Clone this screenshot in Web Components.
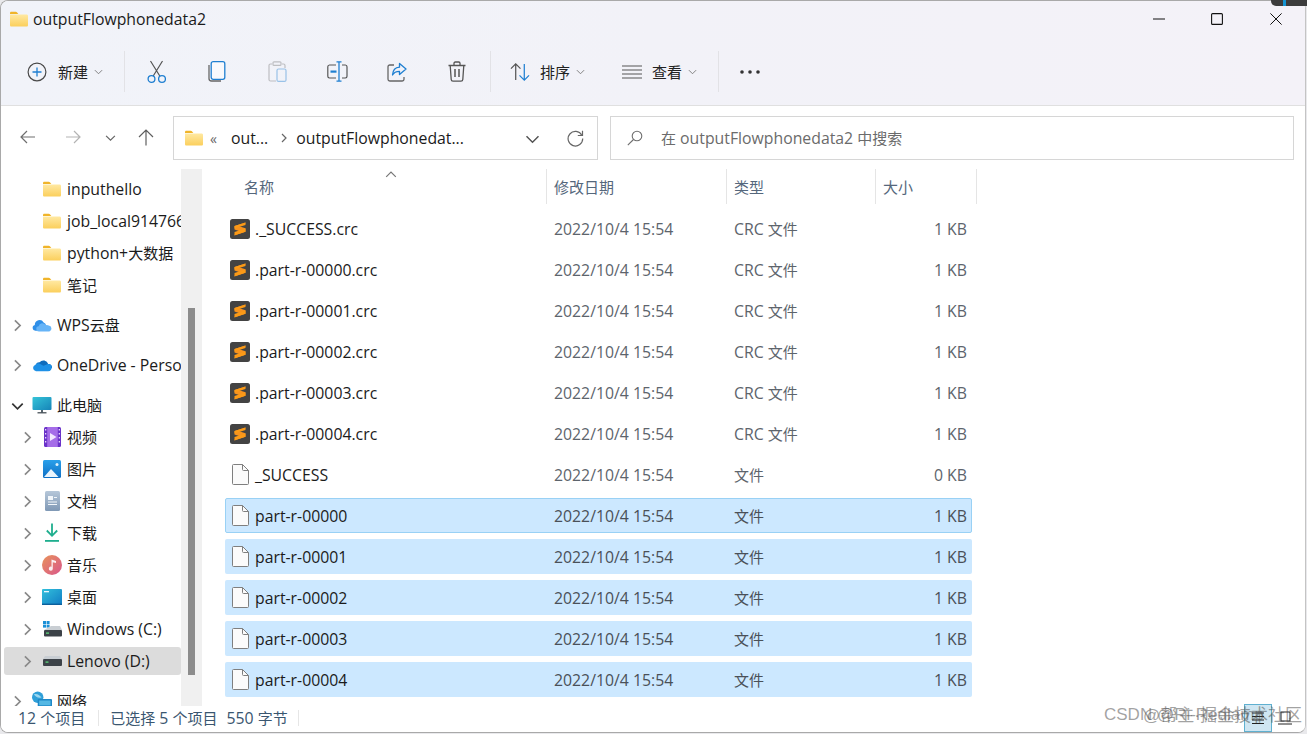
<!DOCTYPE html>
<html lang="zh">
<head>
<meta charset="utf-8">
<title>outputFlowphonedata2</title>
<style>
  html, body { margin: 0; padding: 0; background: #e9e9ec; overflow: hidden; }
  body { font-family: "Open Sans", "Noto Sans CJK SC", sans-serif; font-size: 15.8px; color: #1b1b1b; }
  .c { font-size: 15px; }
</style>
</head>
<body>

<explorer-window>
  <title-bar slot="title" heading="outputFlowphonedata2"></title-bar>
  <command-bar slot="commands"></command-bar>
  <address-row slot="address"></address-row>
  <nav-pane slot="nav">
    <nav-item depth="2" icon="folder">inputhello</nav-item>
    <nav-item depth="2" icon="folder">job_local914766</nav-item>
    <nav-item depth="2" icon="folder">python+<span class="c">大数据</span></nav-item>
    <nav-item depth="2" icon="folder"><span class="c">笔记</span></nav-item>
    <nav-item section depth="1" icon="wps" chevron="right">WPS<span class="c">云盘</span></nav-item>
    <nav-item section depth="1" icon="onedrive" chevron="right">OneDrive - Personal</nav-item>
    <nav-item section depth="1" icon="pc" chevron="down"><span class="c">此电脑</span></nav-item>
    <nav-item depth="2" icon="video" chevron="right"><span class="c">视频</span></nav-item>
    <nav-item depth="2" icon="pictures" chevron="right"><span class="c">图片</span></nav-item>
    <nav-item depth="2" icon="docs" chevron="right"><span class="c">文档</span></nav-item>
    <nav-item depth="2" icon="download" chevron="right"><span class="c">下载</span></nav-item>
    <nav-item depth="2" icon="music" chevron="right"><span class="c">音乐</span></nav-item>
    <nav-item depth="2" icon="desktop" chevron="right"><span class="c">桌面</span></nav-item>
    <nav-item depth="2" icon="drivec" chevron="right">Windows (C:)</nav-item>
    <nav-item depth="2" icon="drived" chevron="right" active>Lenovo (D:)</nav-item>
    <nav-item section depth="1" icon="network" chevron="right"><span class="c">网络</span></nav-item>
  </nav-pane>
  <file-list slot="files">
    <file-row icon="sublime" name="._SUCCESS.crc" kind="CRC 文件" size="1 KB"></file-row>
    <file-row icon="sublime" name=".part-r-00000.crc" kind="CRC 文件" size="1 KB"></file-row>
    <file-row icon="sublime" name=".part-r-00001.crc" kind="CRC 文件" size="1 KB"></file-row>
    <file-row icon="sublime" name=".part-r-00002.crc" kind="CRC 文件" size="1 KB"></file-row>
    <file-row icon="sublime" name=".part-r-00003.crc" kind="CRC 文件" size="1 KB"></file-row>
    <file-row icon="sublime" name=".part-r-00004.crc" kind="CRC 文件" size="1 KB"></file-row>
    <file-row icon="file" name="_SUCCESS" kind="文件" size="0 KB"></file-row>
    <file-row icon="file" name="part-r-00000" kind="文件" size="1 KB" selected focused></file-row>
    <file-row icon="file" name="part-r-00001" kind="文件" size="1 KB" selected></file-row>
    <file-row icon="file" name="part-r-00002" kind="文件" size="1 KB" selected></file-row>
    <file-row icon="file" name="part-r-00003" kind="文件" size="1 KB" selected></file-row>
    <file-row icon="file" name="part-r-00004" kind="文件" size="1 KB" selected></file-row>
  </file-list>
  <status-bar slot="status"></status-bar>
</explorer-window>

<script>
  (function() {

    const ICONS = {
      folder: `<svg viewBox="0 0 18 16" width="18" height="16"><path d="M0 2.2C0 1.3.6.8 1.4.8h4.4c.5 0 .8.2 1.1.5L8.3 3H0z" fill="#f0b429"/><path d="M0 3.4h16.6c.8 0 1.4.6 1.4 1.4v9.4c0 .8-.6 1.3-1.4 1.3H1.4C.6 15.5 0 15 0 14.2z" fill="url(#fg)"/><defs><linearGradient id="fg" x1="0" y1="0" x2="0" y2="1"><stop offset="0" stop-color="#ffe9a3"/><stop offset="1" stop-color="#fbcf5c"/></linearGradient></defs></svg>`,
      sublime: `<svg viewBox="0 0 20 20" width="20" height="20"><rect width="20" height="20" rx="2.5" fill="#434343"/><path d="M15.5 3.500 4.500 7v3.600l7.400 2.400-7.400 2.500v1l11-3.700V9.200L8.200 6.900l7.300-2.300z" fill="#f7931e"/><path d="M15.500 3.500 4.500 7v2.600l11-3.500zM4.500 13l11-3.500v3.200l-11 3.600z" fill="#fb9a17"/></svg>`,
      file: `<svg viewBox="0 0 17 21" width="17" height="21"><path d="M1.500.5h9l6 6v13a1 1 0 0 1-1 1h-14a1 1 0 0 1-1-1v-18a1 1 0 0 1 1-1z" fill="#fbfbfb" stroke="#7f7f7f"/><path d="M10.500.5v5a1 1 0 0 0 1 1h5" fill="none" stroke="#7f7f7f"/></svg>`,
      wps: `<svg viewBox="0 0 20 14" width="20" height="14"><path d="M3.400 12.800a3 3 0 0 1-.6-5.900 4.700 4.700 0 0 1 8.800-2.400 3.600 3.600 0 0 1 2.500 3.200H8.500c-1.700 0-2.700 2.400-2.700 5.100z" fill="#2f8fe8"/><path d="M7 13.500a2.600 2.600 0 0 1-.2-5.200 3.500 3.500 0 0 1 6.700-1 3.100 3.100 0 0 1 3.200.2 3.100 3.100 0 0 1 .7 6z" fill="#66b4f7"/></svg>`,
      onedrive: `<svg viewBox="0 0 21 14" width="21" height="14"><path d="M8 4.200A5.200 5.200 0 0 1 17 6a3.600 3.600 0 0 1 4 4.200L8 12.500 4 6.400a4 4 0 0 1 4-2.200z" fill="#0f6cbd"/><path d="M4.200 13.600A3.500 3.500 0 0 1 3.600 6.800a4 4 0 0 1 5-.9l3.400 2 4-1.800c1.900-.8 3.900.2 4.600 2.100.6 1.800-.5 5.400-3.600 5.400z" fill="#1e90e6"/></svg>`,
      pc: `<svg viewBox="0 0 20 20" width="20" height="20"><defs><linearGradient id="pcg" x1="0" y1="0" x2="1" y2="1"><stop offset="0" stop-color="#35c4d8"/><stop offset="1" stop-color="#1684b8"/></linearGradient></defs><rect x=".5" y="2" width="19" height="13" rx="1" fill="url(#pcg)"/><rect x="9" y="15" width="2" height="2.500" fill="#57636c"/><rect x="5.500" y="17.200" width="9" height="1.200" fill="#3a444b"/></svg>`,
      video: `<svg viewBox="0 0 17 20" width="17" height="20"><rect width="17" height="20" rx="1.500" fill="#6a32c9"/><rect x="3.200" y="0" width="10.600" height="20" fill="#a56de8"/><path d="M6 6l6.500 4-6.500 4z" fill="#f3e8ff"/><g fill="#e6d5fb"><rect x="1" y="2" width="1.300" height="1.500"/><rect x="1" y="6" width="1.300" height="1.500"/><rect x="1" y="10" width="1.300" height="1.500"/><rect x="1" y="14" width="1.300" height="1.500"/><rect x="14.700" y="2" width="1.300" height="1.500"/><rect x="14.700" y="6" width="1.300" height="1.500"/><rect x="14.700" y="10" width="1.300" height="1.500"/><rect x="14.700" y="14" width="1.300" height="1.500"/></g></svg>`,
      pictures: `<svg viewBox="0 0 18 18" width="18" height="18"><defs><linearGradient id="pg" x1="0" y1="0" x2="0" y2="1"><stop offset="0" stop-color="#2aa0ea"/><stop offset="1" stop-color="#0f6fc4"/></linearGradient></defs><rect width="18" height="18" rx="1.500" fill="url(#pg)"/><path d="M1 17l7-8 7.500 8z" fill="#eaf5fd"/><circle cx="14" cy="4.500" r="1.500" fill="#dff1fc"/></svg>`,
      docs: `<svg viewBox="0 0 15 20" width="15" height="20"><defs><linearGradient id="dg" x1="0" y1="0" x2="0" y2="1"><stop offset="0" stop-color="#b6c7d9"/><stop offset="1" stop-color="#7f98b5"/></linearGradient></defs><rect width="15" height="20" rx="1.500" fill="url(#dg)"/><g fill="#f2f6fa"><rect x="3" y="5" width="5" height="4"/><rect x="9" y="6" width="3" height="1"/><rect x="3" y="10.500" width="9" height="1"/><rect x="3" y="13" width="9" height="1"/></g></svg>`,
      download: `<svg viewBox="0 0 16 20" width="16" height="20"><path d="M8 .5v12M2.800 7.500 8 12.800l5.200-5.300" fill="none" stroke="#1fae8e" stroke-width="1.800"/><rect x="1" y="17" width="14" height="1.800" fill="#1fae8e"/></svg>`,
      music: `<svg viewBox="0 0 20 20" width="20" height="20"><defs><linearGradient id="mg" x1="0" y1="0" x2="1" y2="1"><stop offset="0" stop-color="#e8935a"/><stop offset="1" stop-color="#d9568c"/></linearGradient></defs><circle cx="10" cy="10" r="10" fill="url(#mg)"/><path d="M9.500 4.500v7.300a2 2 0 1 0 1.300 1.900V7.300l3.200.8V6z" fill="#fbeef0"/></svg>`,
      desktop: `<svg viewBox="0 0 20 16" width="20" height="16"><defs><linearGradient id="dkg" x1="0" y1="0" x2="1" y2="1"><stop offset="0" stop-color="#32c0dc"/><stop offset="1" stop-color="#117cc4"/></linearGradient></defs><rect width="20" height="16" rx="1" fill="url(#dkg)"/><rect x="2" y="2" width="5" height="1.300" fill="#e9f8fd"/><rect x="0" y="14.600" width="20" height="1.400" fill="#0c5f9c"/></svg>`,
      drivec: `<svg viewBox="0 0 19 17" width="19" height="17"><g fill="#1a8fd6"><rect width="3" height="3"/><rect x="3.600" width="3" height="3"/><rect y="3.600" width="3" height="3"/><rect x="3.600" y="3.600" width="3" height="3"/></g><path d="M8 5h9l2 4H1z" fill="#c9ced3"/><rect x="1" y="9" width="18" height="6.500" rx="1" fill="#3c4248"/><rect x="3" y="11.500" width="3" height="1.200" fill="#5ee07f"/></svg>`,
      drived: `<svg viewBox="0 0 19 11" width="19" height="11"><path d="M2 0h15l2 3H0z" fill="#c9ced3"/><rect y="3" width="19" height="7" rx="1" fill="#3c4248"/><rect x="2.500" y="5.500" width="3" height="1.200" fill="#5ee07f"/></svg>`,
      network: `<svg viewBox="0 0 21 20" width="21" height="20"><circle cx="6" cy="6" r="6" fill="#2f9fd8"/><path d="M2 3c3-1.500 6 1 8 3-3 1.500-6 0-8-3z" fill="#9bd6ee"/><rect x="6" y="8" width="15" height="11" rx="1" fill="#1e88c7"/><rect x="7.500" y="9.500" width="12" height="5" fill="#55b8e4"/></svg>`,
      plus: `<svg viewBox="0 0 20 20" width="20" height="20"><circle cx="10" cy="10" r="8.900" fill="none" stroke="#4a4a4a" stroke-width="1.200"/><path d="M10 5.500v9M5.500 10h9" stroke="#1f7fd1" stroke-width="1.300"/></svg>`,
      cut: `<svg viewBox="0 0 20 24" width="20" height="24"><path d="M3.500 1 12.800 16M15.500 1 6.200 16" stroke="#555" stroke-width="1.200" fill="none"/><circle cx="4.500" cy="19" r="3.400" fill="none" stroke="#1f7fd1" stroke-width="1.300"/><circle cx="15" cy="19" r="3.400" fill="none" stroke="#1f7fd1" stroke-width="1.300"/></svg>`,
      copy: `<svg viewBox="0 0 18 21" width="18" height="21"><path d="M1 4v13.500C1 19 2 20 3.500 20H13" fill="none" stroke="#666" stroke-width="1.300"/><rect x="3.200" y=".7" width="13.600" height="17.600" rx="2" fill="#fff" fill-opacity=".5" stroke="#1f7fd1" stroke-width="1.300"/></svg>`,
      paste: `<svg viewBox="0 0 19 21" width="19" height="21"><g opacity=".42"><path d="M4 3H2.500A1.500 1.500 0 0 0 1 4.500v14A1.500 1.500 0 0 0 2.500 20H8M14 3h1.500A1.500 1.500 0 0 1 17 4.500V7" fill="none" stroke="#777" stroke-width="1.200"/><rect x="5" y=".8" width="8" height="3.600" rx="1" fill="none" stroke="#777" stroke-width="1.200"/><rect x="9" y="8" width="9" height="12.400" rx="1.500" fill="none" stroke="#1f7fd1" stroke-width="1.200"/></g></svg>`,
      rename: `<svg viewBox="0 0 21 21" width="21" height="21"><path d="M9 4H2.500A1.800 1.800 0 0 0 .8 5.800v9.400A1.800 1.800 0 0 0 2.500 17H9M15 4h3.300A1.800 1.800 0 0 1 20 5.800v9.400a1.800 1.800 0 0 1-1.700 1.800H15" fill="none" stroke="#555" stroke-width="1.200"/><path d="M12 1v19M9.500 .8h5M9.500 20.200h5" stroke="#1f7fd1" stroke-width="1.300" fill="none"/><rect x="3.500" y="9.500" width="6" height="2.200" fill="#1f7fd1"/></svg>`,
      share: `<svg viewBox="0 0 20 20" width="20" height="20"><path d="M7 3H2.800A1.800 1.800 0 0 0 1 4.800v12.400A1.800 1.800 0 0 0 2.800 19h12.400a1.800 1.800 0 0 0 1.800-1.800V15" fill="none" stroke="#666" stroke-width="1.300"/><path d="M12.500 1.500 19 7l-6.500 5.500V9.300C9 9.300 6.800 10.500 5.500 13c.3-4.500 3-7.500 7-7.800z" fill="none" stroke="#1f7fd1" stroke-width="1.300" stroke-linejoin="round"/></svg>`,
      trash: `<svg viewBox="0 0 18 21" width="18" height="21"><path d="M.5 4.500h17M6 4.500V2.300C6 1.500 6.500 1 7.300 1h3.400c.8 0 1.300.5 1.300 1.300v2.200M2.200 4.500l1 14c.1 1 .8 1.700 1.800 1.700h8c1 0 1.700-.7 1.800-1.700l1-14" fill="none" stroke="#555" stroke-width="1.300"/><path d="M7 8v8M11 8v8" stroke="#555" stroke-width="1.500"/></svg>`,
      sort: `<svg viewBox="0 0 21 20" width="21" height="20"><path d="M6 18.500V2M1 6.500 6 1.500l5 5" fill="none" stroke="#555" stroke-width="1.300"/><path d="M15 1.500V18M10 13.500l5 5 5-5" fill="none" stroke="#1f7fd1" stroke-width="1.300"/></svg>`,
      view: `<svg viewBox="0 0 20 14" width="20" height="14"><path d="M0 1h20M0 5h20M0 9h20M0 13h20" stroke="#555" stroke-width="1.100"/></svg>`,
      dots: `<svg viewBox="0 0 20 4" width="20" height="4"><circle cx="2" cy="2" r="1.800" fill="#333"/><circle cx="10" cy="2" r="1.800" fill="#333"/><circle cx="18" cy="2" r="1.800" fill="#333"/></svg>`,
      back: `<svg viewBox="0 0 16 14" width="16" height="14"><path d="M15 7H1M7 1 1 7l6 6" fill="none" stroke="#6e6e6e" stroke-width="1.200"/></svg>`,
      forward: `<svg viewBox="0 0 16 14" width="16" height="14"><path d="M1 7h14M9 1l6 6-6 6" fill="none" stroke="#b3b3b3" stroke-width="1.200"/></svg>`,
      up: `<svg viewBox="0 0 16 17" width="16" height="17"><path d="M8 16.500V1M1 8l7-7 7 7" fill="none" stroke="#5f5f5f" stroke-width="1.200"/></svg>`,
      refresh: `<svg viewBox="0 0 17 17" width="17" height="17"><path d="M14.800 5.200a7.300 7.300 0 1 0 .9 3.300" fill="none" stroke="#666" stroke-width="1.200"/><path d="M15.500 .8v4.700h-4.700" fill="none" stroke="#666" stroke-width="1.200"/></svg>`,
      search: `<svg viewBox="0 0 16 16" width="16" height="16"><circle cx="10" cy="6" r="4.800" fill="none" stroke="#6e6e6e" stroke-width="1.100"/><path d="M6.500 9.500 .8 15.200" stroke="#6e6e6e" stroke-width="1.100"/></svg>`,
      minimize: `<svg viewBox="0 0 12 2" width="12" height="2"><path d="M0 1h12" stroke="#111" stroke-width="1"/></svg>`,
      maximize: `<svg viewBox="0 0 12 12" width="12" height="12"><rect x=".6" y=".6" width="10.800" height="10.800" rx="1" fill="none" stroke="#111" stroke-width="1.100"/></svg>`,
      close: `<svg viewBox="0 0 12 12" width="12" height="12"><path d="M.4.400l11.200 11.200M11.600.400.400 11.600" stroke="#111" stroke-width="1"/></svg>`,
      details: `<svg viewBox="0 0 14 14" width="14" height="14"><path d="M1 2h12M1 5.500h12M1 9h12M1 12.500h12" stroke="#222" stroke-width="1"/></svg>`,
      tiles: `<svg viewBox="0 0 14 14" width="14" height="14"><rect x="3" y="1" width="9" height="9" fill="none" stroke="#222"/><path d="M0 13h14" stroke="#222"/></svg>`
    };

    // small caret used by menus and the tree
    function caret(dir, size, color, weight) {
      const d = dir === 'down' ? 'M1 3.500 5 7.500l4-4' : dir === 'up' ? 'M1 6.500 5 2.500l4 4' : 'M3 1l4 4-4 4';
      return `<svg viewBox="0 0 10 10" width="${size}" height="${size}"><path d="${d}" fill="none" stroke="${color}" stroke-width="${weight}"/></svg>`;
    }

    // Chinese runs stay at 15px, the latin text around them is a little larger
    function mixed(text) {
      return text.replace(/[\u4e00-\u9fff]+/g, (run) => `<span style="font-size:15px">${run}</span>`);
    }

    class XElement extends HTMLElement {
      constructor() {
        super();
        this.attachShadow({mode: 'open'});
      }
      connectedCallback() {
        this.shadowRoot.innerHTML = this.render();
      }
    }

    class ExplorerWindow extends XElement {
      render() {
        return `<style>
          :host { display: block; width: 1307px; height: 734px; box-sizing: border-box; position: relative; }
          #frame { box-sizing: border-box; width: 1306px; height: 733px; display: flex; flex-direction: column; overflow: hidden;
            border: 1px solid #a9a9a9; border-radius: 8px; background: #fff; border-right-color: #c4c4c4; }
          #chrome { background: linear-gradient(90deg, #f1f3f9 0%, #f2f2f8 50%, #f4f2f8 100%); border-bottom: 1px solid #e0e0e0; }
          #main { flex: 1; display: flex; min-height: 0; }
          #corner { position: absolute; right: 0; top: 0; width: 36px; height: 6px; background: #3c3c3c; border-bottom-left-radius: 5px; }
          #corner::after { content: ""; position: absolute; right: 21px; top: 0; width: 3px; height: 6px; background: #1494d2; }
          #mark { position: absolute; left: 1104px; top: 704px; font: 17px/22px "Liberation Sans", "Noto Sans CJK SC", sans-serif; color: rgba(70,70,70,.5); white-space: nowrap; }
          #mark span { position: absolute; left: 0; top: 0; }
          #mark span + span { left: 39px; top: 1px; }
        </style>
        <div id="frame">
          <div id="chrome"><slot name="title"></slot><slot name="commands"></slot></div>
          <slot name="address"></slot>
          <div id="main"><slot name="nav"></slot><slot name="files"></slot></div>
          <slot name="status"></slot>
        </div>
        <div id="corner"></div>
        <div id="mark"><span>CSDN @Ri-Redlamp</span><span>@帮主·掘金技术社区</span></div>`;
      }
    }

    class TitleBar extends XElement {
      render() {
        return `<style>
          :host { display: flex; align-items: center; height: 41px; padding-left: 9px; }
          #ico { display: flex; margin-right: 5px; margin-top: -5px; }
          #name { flex: 1; margin-top: -5px; white-space: nowrap; }
          .ctl { width: 58.500px; display: flex; justify-content: center; align-items: center; margin-top: -6px; }
          #ctls { display: flex; }
        </style>
        <span id="ico">${ICONS.folder}</span>
        <span id="name">${this.getAttribute('heading')}</span>
        <div id="ctls">
          <span class="ctl">${ICONS.minimize}</span>
          <span class="ctl">${ICONS.maximize}</span>
          <span class="ctl">${ICONS.close}</span>
        </div>`;
      }
    }

    class CommandBar extends XElement {
      render() {
        const tool = (name) => `<span class="tool">${ICONS[name]}</span>`;
        const menu = (name, label, width, gap) => `<span class="menu" style="width:${width}px"><span class="mi" style="margin-right:${gap}px">${ICONS[name]}</span><span class="lb">${label}</span><span class="cv">${caret('down', 9, '#777', 1)}</span></span>`;
        return `<style>
          :host { display: flex; align-items: center; height: 59px; padding: 0 0 4px 26px; }
          .menu { display: flex; align-items: center; height: 100%; box-sizing: border-box; flex: none; }
          .mi { width: 20px; display: flex; justify-content: center; }
          .lb { white-space: nowrap; color: #222; font-size: 15px; }
          .cv { display: flex; margin-left: 6px; }
          .tool { width: 60px; display: flex; justify-content: center; align-items: center; }
          .sep { width: 1px; height: 41px; background: #e2e2e6; margin: 0 2px; flex: none; }
          #dots { display: flex; margin-left: 19px; }
        </style>
        ${menu('plus', '新建', 95, 11)}
        <span class="sep"></span>
        ${tool('cut')}${tool('copy')}${tool('paste')}${tool('rename')}${tool('share')}${tool('trash')}
        <span class="sep" style="margin-left:3px"></span>
        <span style="width:17px"></span>
        ${menu('sort', '排序', 112, 10)}
        ${menu('view', '查看', 94, 10)}
        <span class="sep"></span>
        <span id="dots">${ICONS.dots}</span>`;
      }
    }

    class AddressRow extends XElement {
      render() {
        return `<style>
          :host { display: flex; align-items: center; height: 63px; flex: none; padding-top: 1px; box-sizing: border-box; }
          .nav { display: flex; justify-content: center; align-items: center; margin-top: -2px; }
          .box { box-sizing: border-box; height: 44px; border: 1px solid #d6d6d6; background: #fff; display: flex; align-items: center; }
          #path { width: 425px; margin-left: 11px; padding-left: 11px; }
          #search { width: 684px; margin-left: 12px; padding-left: 16px; color: #6b6b6b; }
          #fold { display: flex; margin-right: 7px; }
          .small { color: #666; font-size: 14px; width: 21px; }
          .seg { white-space: nowrap; color: #1b1b1b; }
          .gt { display: flex; margin: 0 7px 0 11px; }
          #drop { display: flex; margin-left: auto; margin-right: 27px; }
          #ref { display: flex; margin-right: 13px; }
          #sico { display: flex; margin-right: 18px; }
        </style>
        <span class="nav" style="width:54px">${ICONS.back}</span>
        <span class="nav" style="width:36px">${ICONS.forward}</span>
        <span class="nav" style="width:39px">${caret('down', 11, '#666', 1.100)}</span>
        <span class="nav" style="width:32px">${ICONS.up}</span>
        <div class="box" id="path">
          <span id="fold">${ICONS.folder}</span>
          <span class="small">«</span>
          <span class="seg">out...</span>
          <span class="gt">${caret('right', 10, '#666', 1.200)}</span>
          <span class="seg">outputFlowphonedat...</span>
          <span id="drop">${caret('down', 15, '#555', 1)}</span>
          <span id="ref">${ICONS.refresh}</span>
        </div>
        <div class="box" id="search">
          <span id="sico">${ICONS.search}</span>
          <span>${mixed('在 outputFlowphonedata2 中搜索')}</span>
        </div>`;
      }
    }

    class NavPane extends XElement {
      render() {
        return `<style>
          :host { display: flex; width: 201px; flex: none; height: 100%; background: #fff; }
          #list { width: 180px; flex: none; overflow: hidden; padding-top: 4px; box-sizing: border-box; height: 100%; }
          #track { width: 21px; flex: none; background: #f0f0f0; height: 100%; display: flex; justify-content: center; }
          #thumb { width: 7px; height: 367px; margin-top: 139px; background: #8c8c8c; margin-left: -1px; }
        </style>
        <div id="list"><slot></slot></div>
        <div id="track"><div id="thumb"></div></div>`;
      }
    }

    class NavItem extends XElement {
      render() {
        const top = this.getAttribute('depth') === '1';
        const chev = this.getAttribute('chevron');
        const mark = chev ? caret(chev, 13, chev === 'down' ? '#333' : '#8a8a8a', 1.300) : '';
        return `<style>
          :host { display: block; height: 32px; padding: 2px 0; box-sizing: border-box; }
          :host([section]) { margin-top: 8px; }
          #row { height: 28px; display: flex; align-items: center; margin-left: 3px; border-radius: 3px; white-space: nowrap; overflow: hidden; }
          :host([active]) #row { background: #dcdcdc; }
          #chev { display: flex; justify-content: center; width: 13px; flex: none; margin-left: ${top ? 7 : 17}px; }
          #ico { width: 20px; display: flex; justify-content: center; flex: none; margin-left: 8px; margin-right: 5px; }
        </style>
        <div id="row">
          <span id="chev">${mark}</span>
          <span id="ico">${ICONS[this.getAttribute('icon')]}</span>
          <span><slot></slot></span>
        </div>`;
      }
    }

    class FileList extends XElement {
      render() {
        return `<style>
          :host { display: block; flex: 1; min-width: 0; padding-left: 23px; background: #fff; }
          #head { display: grid; grid-template-columns: 322px 180px 149px 101px; height: 35px; color: #55677c; font-size: 15px; }
          #head span { box-sizing: border-box; padding-left: 7px; display: flex; align-items: center; border-right: 1px solid #e5e5e5; height: 35px; position: relative; }
          #head span:first-child { padding-left: 19px; }
          #head i { position: absolute; left: 160px; top: 0; display: flex; }
          #rows { display: flex; flex-direction: column; gap: 6px; padding-top: 7px; }
        </style>
        <div id="head">
          <span>名称<i>${caret('up', 12, '#777', 1)}</i></span>
          <span>修改日期</span>
          <span>类型</span>
          <span>大小</span>
        </div>
        <div id="rows"><slot></slot></div>`;
      }
    }

    class FileRow extends XElement {
      render() {
        const icon = this.getAttribute('icon');
        return `<style>
          :host { display: grid; grid-template-columns: 328px 180px 142px 95px; align-items: center; box-sizing: border-box; width: 747px; height: 35px; border: 1px solid transparent; border-radius: 2px; color: #5d646c; }
          :host([selected]) { background: #cce8ff; color: #4a5058; }
          :host([focused]) { border-color: #99d1f5; }
          #name { display: flex; align-items: center; color: #1b1b1b; padding-left: 4px; }
          #ico { width: 20px; display: flex; justify-content: center; margin-right: 5px; }
          #size { text-align: right; padding-right: 4px; }
        </style>
        <span id="name"><span id="ico">${ICONS[icon]}</span>${this.getAttribute('name')}</span>
        <span>2022/10/4 15:54</span>
        <span>${mixed(this.getAttribute('kind'))}</span>
        <span id="size">${this.getAttribute('size')}</span>`;
      }
    }

    class StatusBar extends XElement {
      render() {
        return `<style>
          :host { display: flex; align-items: center; height: 26px; flex: none; padding: 0 0 2px 17px; box-sizing: border-box; color: #3a5670; background: #fff; position: relative; white-space: nowrap; }
          .sep { width: 1px; height: 16px; background: #e6e6e6; margin: 0 11px 0 13px; }
          #views { display: flex; margin-left: auto; margin-right: 6px; align-self: flex-end; margin-bottom: -2px; }
          #views span { width: 28px; height: 28px; display: flex; align-items: center; justify-content: center; box-sizing: border-box; }
          #views span:first-child { background: #cfe6f2; border: 1px solid #5fb0d0; margin-right: -1px; }
        </style>
        <span>${mixed('12 个项目')}</span><span class="sep"></span>
        <span>${mixed('已选择 5 个项目')}</span><span style="width:9px"></span><span>${mixed('550 字节')}</span>
        <span class="sep" style="margin-left:10px"></span>
        <div id="views"><span>${ICONS.details}</span><span>${ICONS.tiles}</span></div>`;
      }
    }

    customElements.define('explorer-window', ExplorerWindow);
    customElements.define('title-bar', TitleBar);
    customElements.define('command-bar', CommandBar);
    customElements.define('address-row', AddressRow);
    customElements.define('nav-pane', NavPane);
    customElements.define('nav-item', NavItem);
    customElements.define('file-list', FileList);
    customElements.define('file-row', FileRow);
    customElements.define('status-bar', StatusBar);

  })();
</script>
</body>
</html>
